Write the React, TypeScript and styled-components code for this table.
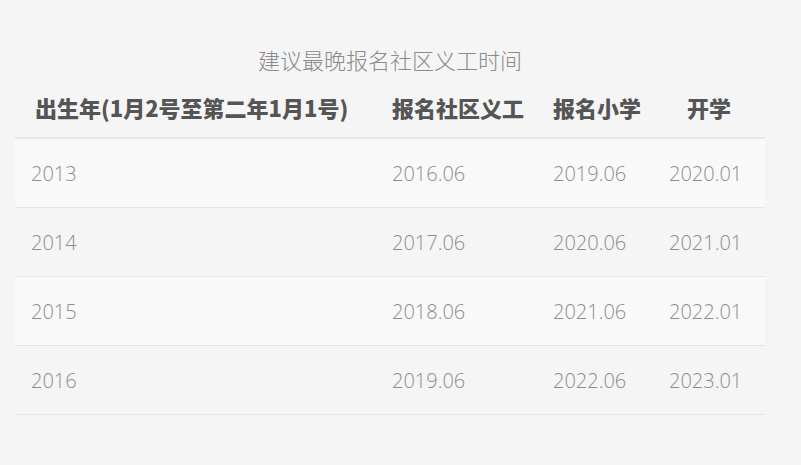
import styled, { createGlobalStyle } from "styled-components";

const GlobalStyle = createGlobalStyle`
  html, body {
    margin:0;
    padding:0;
    background:#f5f5f5;
  }
  body{
    font-family:"Open Sans","Noto Sans CJK SC",sans-serif;
  }
`;

const Page = styled.div`
  padding:43px 15px 0 15px;
`;

const Table = styled.table`
  width:750px;
  border-collapse:collapse;
  table-layout:fixed;
`;

const Caption = styled.caption`
  font-size:22px;
  font-weight:300;
  color:#8a8a8a;
  line-height:32px;
  padding-bottom:2px;
  font-family:"Noto Sans CJK SC",sans-serif;
`;

const HeadCell = styled.th<{ $align?: string; $inset?: number }>`
  text-align:${({ $align }) => $align || "left"};
  padding:0 16px 0 ${({ $inset }) => $inset || 16}px;
  height:61px;
  font-size:22px;
  font-weight:900;
  color:#555;
  border-bottom:2px solid #e6e6e6;
  font-family:"Noto Sans CJK SC",sans-serif;
  white-space:nowrap;
  box-sizing:border-box;
`;

const Row = styled.tr<{ $odd: boolean }>`
  background:${({ $odd }) => ($odd ? "#f9f9f9" : "transparent")};
  border-bottom:1px solid #e6e6e6;
`;

const Cell = styled.td`
  height:68px;
  padding:0 16px;
  font-size:20px;
  font-weight:300;
  color:#8c8c8c;
  font-family:"Open Sans",sans-serif;
`;

const columns = [
  { title: "出生年(1月2号至第二年1月1号)", width: 361, inset: 20 },
  { title: "报名社区义工", width: 161 },
  { title: "报名小学", width: 116 },
  { title: "开学", width: 112, align: "center" },
];

const rows = [
  ["2013", "2016.06", "2019.06", "2020.01"],
  ["2014", "2017.06", "2020.06", "2021.01"],
  ["2015", "2018.06", "2021.06", "2022.01"],
  ["2016", "2019.06", "2022.06", "2023.01"],
];

const App = () => {
  return (
    <Page>
      <GlobalStyle />
      <Table>
        <Caption>建议最晚报名社区义工时间</Caption>
        <colgroup>
          {columns.map((c) => (
            <col key={c.title} style={{ width: c.width }} />
          ))}
        </colgroup>
        <thead>
          <tr>
            {columns.map((c) => (
              <HeadCell key={c.title} $align={c.align} $inset={c.inset}>
                {c.title}
              </HeadCell>
            ))}
          </tr>
        </thead>
        <tbody>
          {rows.map((r, i) => (
            <Row key={r[0]} $odd={i % 2 === 0}>
              {r.map((v, j) => (
                <Cell key={j}>{v}</Cell>
              ))}
            </Row>
          ))}
        </tbody>
      </Table>
    </Page>
  );
};

export default App;
